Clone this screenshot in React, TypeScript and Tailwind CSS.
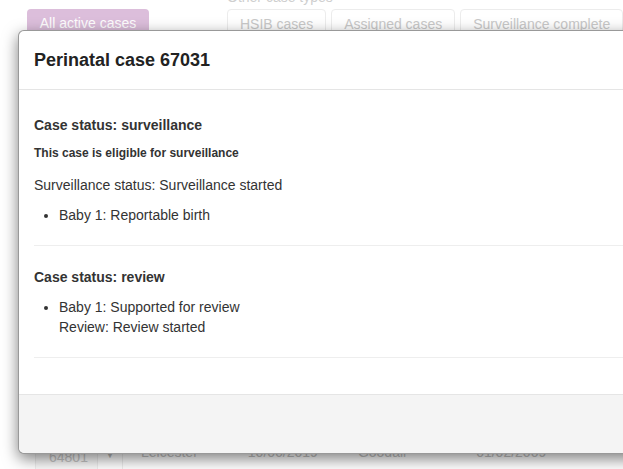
import React from 'react';

const otherTypes = ['HSIB cases', 'Assigned cases', 'Surveillance complete'];

const Backdrop: React.FC = () => (
  <div className="flex h-full flex-col">
    <div className="-mt-[13px] flex items-end whitespace-nowrap">
      <div className="ml-[27px] flex h-[34px] w-[122px] shrink-0 items-start justify-center rounded-t-[4px] bg-[#dcbedb] pt-[4px] text-[14px] text-white">
        All active cases
      </div>
      <div className="ml-[78px] flex shrink-0 flex-col">
        <span className="mb-[2px] text-[14px] leading-[20px] text-[#cfcfcf]">Other case types</span>
        <div className="flex gap-[5px]">
          {otherTypes.map(t => (
            <div key={t} className="h-[34px] shrink-0 rounded-[4px] border border-[#ececec] px-[12px] pt-[4px] text-[14px] text-[#c9c9c9]">
              {t}
            </div>
          ))}
        </div>
      </div>
    </div>
    <div className="mt-auto flex h-[28px] items-start whitespace-nowrap text-[14px] text-[#c4c4c4]">
      <div className="ml-[35px] h-full w-[63px] shrink-0 border-x border-[#eee] bg-[#fafafa] pl-[13px] pt-[6px] text-[#c8c8c8]">64801</div>
      <div className="h-full w-[25px] shrink-0 border-r border-[#eee] pt-[6px] text-center text-[10px] text-[#bbb]">▼</div>
      <div className="ml-[18px] shrink-0 pt-[1px]">Leicester</div>
      <div className="ml-[50px] shrink-0 pt-[1px]">10/06/2019</div>
      <div className="ml-[40px] shrink-0 pt-[1px]">Goodall</div>
      <div className="ml-[70px] shrink-0 pt-[1px]">01/02/2009</div>
      <div className="ml-[76px] shrink-0 pt-[1px]">P</div>
    </div>
  </div>
);

const CaseModal: React.FC = () => (
  <div className="absolute left-[18px] top-[30px] flex h-[424px] w-[660px] flex-col rounded-[6px] border border-black/40 bg-white shadow-[0_5px_15px_rgba(0,0,0,0.5)]">
    <div className="flex h-[59px] items-center border-b border-[#e5e5e5] px-[15px]">
      <h3 className="text-[18px] font-bold text-[#222]">Perinatal case 67031</h3>
    </div>
    <div className="px-[15px] pt-[25px] text-[14px] leading-[20px] text-[#333]">
      <h4 className="font-bold">Case status: surveillance</h4>
      <p className="mt-[10px] text-[12px] font-bold leading-[17px]">This case is eligible for surveillance</p>
      <p className="mt-[13px]">Surveillance status: Surveillance started</p>
      <ul className="mt-[10px] list-disc pl-[25px]">
        <li>Baby 1: Reportable birth</li>
      </ul>
      <hr className="mt-[20px] border-[#eee]" />
      <h4 className="mt-[21px] font-bold">Case status: review</h4>
      <ul className="mt-[10px] list-disc pl-[25px]">
        <li>
          Baby 1: Supported for review
          <br />
          Review: Review started
        </li>
      </ul>
      <hr className="mt-[20px] border-[#eee]" />
    </div>
    <div className="mt-auto h-[59px] rounded-b-[6px] border-t border-[#e5e5e5] bg-[#f4f4f4]" />
  </div>
);

export default function App() {
  return (
    <div className="relative h-[469px] w-[623px] overflow-hidden bg-white font-['Liberation_Sans',Arial,sans-serif]">
      <Backdrop />
      <CaseModal />
    </div>
  );
}
